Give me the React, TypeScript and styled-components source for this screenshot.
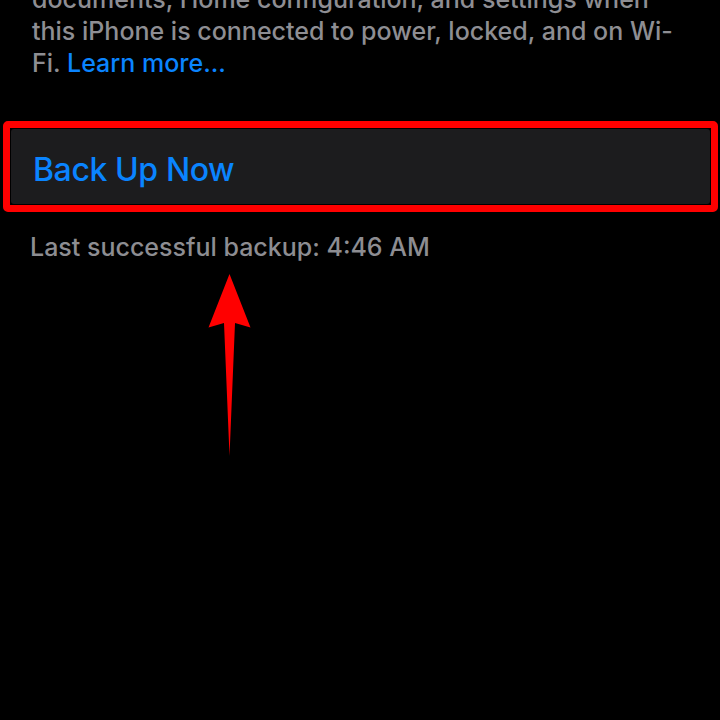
import React from "react";
import styled, { createGlobalStyle } from "styled-components";

const Global = createGlobalStyle`
  html, body { margin: 0; padding: 0; background: #000; }
  body { width: 720px; height: 720px; overflow: hidden; }
  #root { width: 720px; height: 720px; }
`;

const Page = styled.div`
  position: relative;
  width: 720px;
  height: 720px;
  background: #000;
  overflow: hidden;
  font-family: Inter, "Liberation Sans", Arial, sans-serif;
`;

const Footer = styled.p`
  margin: -17px 0 0 0;
  padding: 0 30px 0 32px;
  font-size: 25px;
  font-weight: 500;
  line-height: 32px;
  color: #8e8e93;
  letter-spacing: 0px;
`;

const Link = styled.span`
  color: #0a84ff;
`;

const Highlight = styled.div`
  margin: 42px 2px 0 3px;
  border: 7px solid #ff0000;
  border-radius: 5px;
  background: #000;
  padding: 1px;
`;

const Cell = styled.div`
  height: 75px;
  background: #1c1c1e;
  border-radius: 3px;
  display: flex;
  align-items: center;
  padding: 0 22px;
`;

const ActionLabel = styled.span`
  color: #0a84ff;
  font-size: 32px;
  font-weight: 500;
  letter-spacing: -0.4px;
  line-height: 1;
  padding-top: 7px;
`;

const Caption = styled.div`
  margin: 19px 0 0 30px;
  font-size: 25px;
  font-weight: 500;
  line-height: 32px;
  letter-spacing: 0px;
  color: #8d8d92;
`;

const Arrow = styled.svg`
  position: absolute;
  left: 0;
  top: 0;
  pointer-events: none;
`;

export default function App() {
  return (
    <>
      <Global />
      <Page>
        <Footer>
          documents, Home configuration, and settings when this iPhone is
          connected to power, locked, and on Wi-Fi. <Link>Learn more...</Link>
        </Footer>
        <Highlight>
          <Cell>
            <ActionLabel>Back Up Now</ActionLabel>
          </Cell>
        </Highlight>
        <Caption>Last successful backup: 4:46 AM</Caption>
        <Arrow width="720" height="720" viewBox="0 0 720 720">
          <polygon
            points="229.5,274 250.5,327.5 235,323 229.5,456 224,323 208.5,327.5"
            fill="#ff0000"
          />
        </Arrow>
      </Page>
    </>
  );
}
